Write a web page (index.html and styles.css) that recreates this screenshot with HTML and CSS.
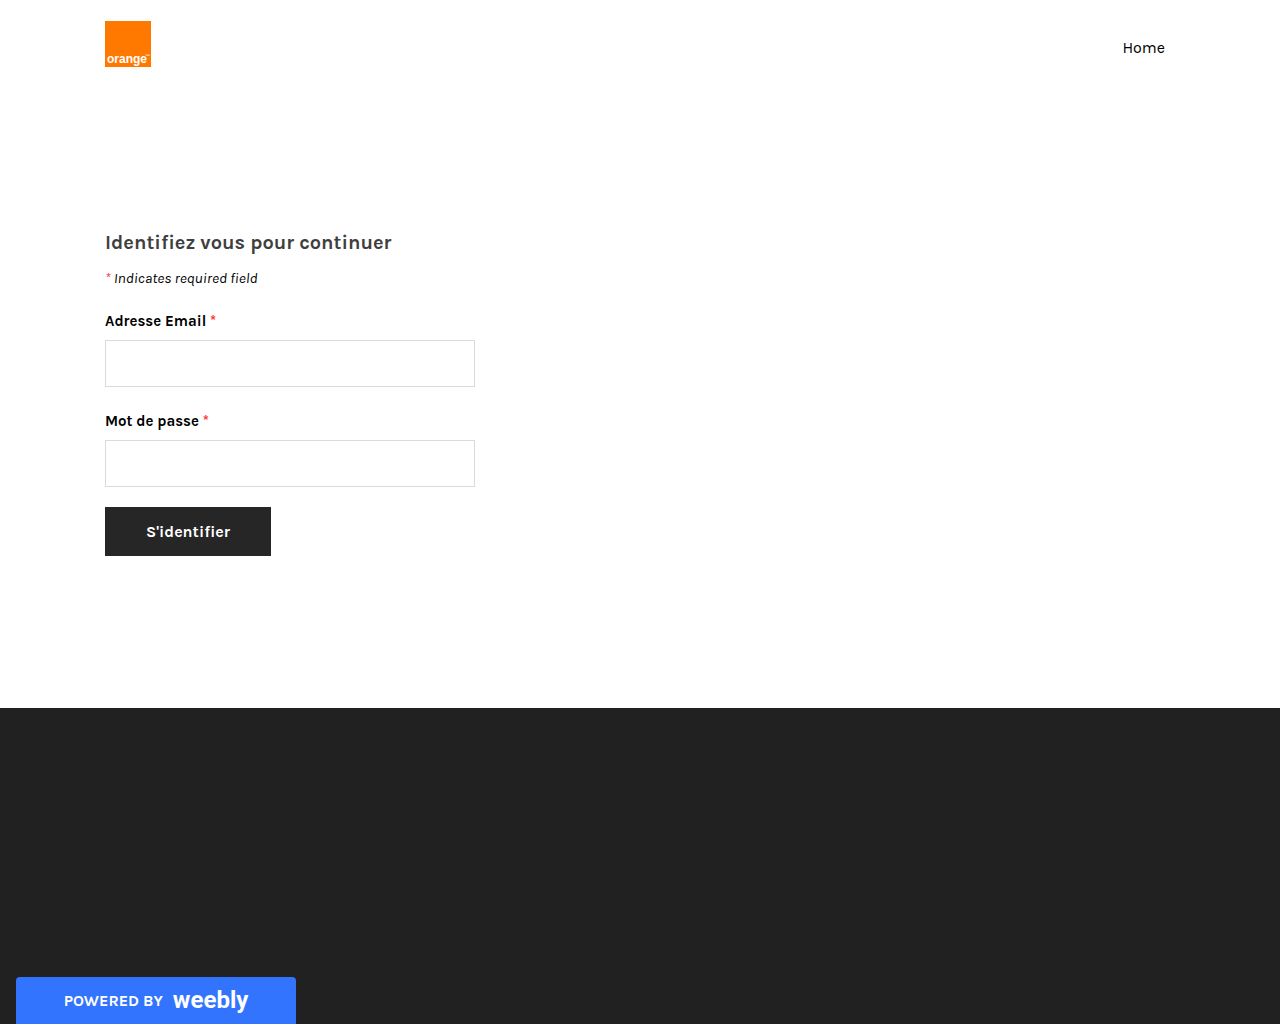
FILE: index.html
```html
<!DOCTYPE html>
<html lang="fr">
<head>
  <meta charset="utf-8">
  <meta name="viewport" content="width=device-width, initial-scale=1">
  <title>Identification</title>
  <link rel="stylesheet" href="styles.css">
</head>
<body>
  <header class="header container">
    <a class="logo" href="#" aria-label="Orange">
      <svg width="46" height="46" viewBox="0 0 46 46" aria-hidden="true">
        <rect width="46" height="46" fill="#ff7900"/>
        <text class="logo-name" x="2" y="42">orange</text>
        <text class="logo-mark" x="40" y="37">™</text>
      </svg>
    </a>
    <nav class="nav"><a href="#">Home</a></nav>
  </header>

  <main class="main container">
    <form class="form">
      <h1 class="title">Identifiez vous pour continuer</h1>
      <p class="note"><span class="required">*</span> Indicates required field</p>
      <div class="field">
        <label for="email">Adresse Email <span class="required">*</span></label>
        <input id="email" type="email" required>
      </div>
      <div class="field">
        <label for="password">Mot de passe <span class="required">*</span></label>
        <input id="password" type="password" required>
      </div>
      <button class="submit" type="submit">S'identifier</button>
    </form>
  </main>

  <footer class="footer">
    <a class="badge" href="#">
      <span class="badge-text">POWERED BY</span>
      <span class="badge-brand">weebly</span>
    </a>
  </footer>
</body>
</html>
```

FILE: styles.css
```css
* {
  box-sizing: border-box;
}

body {
  display: flex;
  flex-direction: column;
  min-height: 100vh;
  margin: 0;
  background: #fff;
  color: #000;
  font-family: Karla, Inter, sans-serif;
  font-size: 15px;
  line-height: 20px;
}

a {
  color: inherit;
  text-decoration: none;
}

.container {
  width: 100%;
  max-width: 1110px;
  margin: 0 auto;
  padding: 0 20px;
}

.header {
  display: flex;
  align-items: center;
  justify-content: space-between;
  height: 88px;
}

.logo,
.logo svg {
  display: block;
}

.logo text {
  fill: #fff;
  font-family: "Liberation Sans", Arial, sans-serif;
  font-weight: bold;
}

.logo .logo-name {
  font-size: 12px;
}

.logo .logo-mark {
  font-size: 5px;
}

.nav {
  padding: 8px 10px 0;
  font-size: 16px;
}

.main {
  padding-top: 143px;
  padding-bottom: 152px;
}

.form {
  max-width: 370px;
}

.title {
  margin: 0 0 13px;
  color: #3f3f3f;
  font-size: 20px;
  line-height: 24px;
  font-weight: 700;
}

.note {
  margin: 0 0 23px;
  font-style: italic;
}

.required {
  color: #f33;
}

.field {
  margin-bottom: 24px;
}

.field label {
  display: block;
  margin-bottom: 9px;
  font-weight: 700;
}

.field input {
  display: block;
  width: 100%;
  height: 47px;
  padding: 0 12px;
  border: 1px solid #dadada;
  border-radius: 0;
  background: #fff;
  font: inherit;
}

.submit {
  display: block;
  margin-top: -4px;
  padding: 15px 41px 14px;
  border: 0;
  background: #262626;
  color: #fff;
  font: inherit;
  font-size: 16px;
  font-weight: 700;
}

.footer {
  flex: 1;
  min-height: 316px;
  background: #212121;
}

.badge {
  position: fixed;
  bottom: 0;
  left: 16px;
  display: flex;
  align-items: center;
  justify-content: center;
  gap: 10px;
  width: 280px;
  height: 47px;
  border-radius: 4px 4px 0 0;
  background: #3374ff;
  color: #fff;
  font-weight: 700;
}

.badge-text {
  font-size: 16px;
}

.badge-brand {
  padding-bottom: 2px;
  font-family: Roboto, sans-serif;
  font-size: 24px;
}
```
